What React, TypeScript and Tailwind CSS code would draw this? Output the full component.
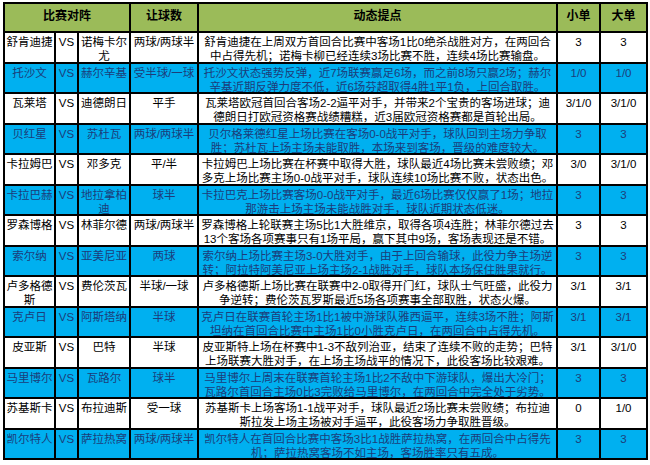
import React from "react";

interface Match {
  home: string;
  away: string;
  handicap: string;
  notes: [string, string];
  small: string;
  big: string;
}

const matches: Match[] = [
  {
    home: "舒肯迪捷",
    away: "诺梅卡尔尤",
    handicap: "两球/两球半",
    notes: [
      "舒肯迪捷在上周双方首回合比赛中客场1比0绝杀战胜对方，在两回合",
      "中占得先机；诺梅卡柳已经连续3场比赛不胜，连续4场比赛输盘。",
    ],
    small: "3",
    big: "3",
  },
  {
    home: "托沙文",
    away: "赫尔辛基",
    handicap: "受半球/一球",
    notes: [
      "托沙文状态强势反弹，近7场联赛赢足6场，而之前8场只赢2场；赫尔",
      "辛基近期反弹力度不低，近6场芬超取得4胜1平1负，上回合取胜。",
    ],
    small: "1/0",
    big: "1/0",
  },
  {
    home: "瓦莱塔",
    away: "迪德朗日",
    handicap: "平手",
    notes: [
      "瓦莱塔欧冠首回合客场2-2逼平对手，并带来2个宝贵的客场进球；迪",
      "德朗日打欧冠资格赛战绩糟糕，近3届欧冠资格赛都是首轮出局。",
    ],
    small: "3/1/0",
    big: "3/1/0",
  },
  {
    home: "贝红星",
    away: "苏杜瓦",
    handicap: "两球/两球半",
    notes: [
      "贝尔格莱德红星上场比赛在客场0-0战平对手，球队回到主场力争取",
      "胜；苏杜瓦上场主场未能取胜，本场来到客场，晋级的难度较大。",
    ],
    small: "3",
    big: "3",
  },
  {
    home: "卡拉姆巴",
    away: "邓多克",
    handicap: "平/半",
    notes: [
      "卡拉姆巴上场比赛在杯赛中取得大胜，球队最近4场比赛未尝败绩；邓",
      "多克上场比赛主场0-0战平对手，球队连续10场比赛不败，状态出色。",
    ],
    small: "3/0",
    big: "3/1/0",
  },
  {
    home: "卡拉巴赫",
    away: "地拉拿柏迪",
    handicap: "球半",
    notes: [
      "卡拉巴克上场比赛客场0-0战平对手，最近6场比赛仅仅赢了1场；地拉",
      "那游击上场主场未能战胜对手，球队近期状态低迷。",
    ],
    small: "3",
    big: "3",
  },
  {
    home: "罗森博格",
    away: "林菲尔德",
    handicap: "两球/两球半",
    notes: [
      "罗森博格上轮联赛主场5比1大胜维京，取得各项4连胜；林菲尔德过去",
      "13个客场各项赛事只有1场平局，赢下其中9场，客场表现还是不错。",
    ],
    small: "3",
    big: "3",
  },
  {
    home: "索尔纳",
    away: "亚美尼亚",
    handicap: "两球",
    notes: [
      "索尔纳上场比赛主场3-0大胜对手，由于上回合输球，此役力争主场逆",
      "转；阿拉特阿美尼亚上场主场2-1战胜对手，球队本场保住胜果就行。",
    ],
    small: "3",
    big: "3",
  },
  {
    home: "卢多格德斯",
    away: "费伦茨瓦",
    handicap: "半球/一球",
    notes: [
      "卢多格德斯上场比赛在联赛中2-0取得开门红，球队士气旺盛，此役力",
      "争逆转；费伦茨瓦罗斯最近5场各项赛事全部取胜，状态火爆。",
    ],
    small: "3/1",
    big: "3/1",
  },
  {
    home: "克卢日",
    away: "阿斯塔纳",
    handicap: "半球",
    notes: [
      "克卢日在联赛首轮主场1比1被中游球队雅西逼平，连续3场不胜；阿斯",
      "坦纳在首回合比赛中主场1比0小胜克卢日，在两回合中占得先机。",
    ],
    small: "3/1",
    big: "3/1",
  },
  {
    home: "皮亚斯",
    away: "巴特",
    handicap: "半球",
    notes: [
      "皮亚斯特上场在杯赛中1-3不敌列治亚，结束了连续不败的走势；巴特",
      "上场联赛大胜对手，在上场主场战平的情况下，此役客场比较艰难。",
    ],
    small: "3/1",
    big: "3/1/0",
  },
  {
    home: "马里博尔",
    away: "瓦路尔",
    handicap: "球半",
    notes: [
      "马里博尔上周末在联赛首轮主场1比2不敌中下游球队，爆出大冷门；",
      "瓦路尔首回合主场0比3完败给马里博尔，在两回合中完全处于劣势。",
    ],
    small: "3",
    big: "3",
  },
  {
    home: "苏基斯卡",
    away: "布拉迪斯",
    handicap: "受一球",
    notes: [
      "苏基斯卡上场客场1-1战平对手，球队最近2场比赛未尝败绩；布拉迪",
      "斯拉发上场主场被对手逼平，此役客场力争取胜晋级。",
    ],
    small: "0",
    big: "1/0",
  },
  {
    home: "凯尔特人",
    away: "萨拉热窝",
    handicap: "两球/两球半",
    notes: [
      "凯尔特人在首回合比赛中客场3比1战胜萨拉热窝，在两回合中占得先",
      "机；萨拉热窝客场不如主场，客场胜率只有五成。",
    ],
    small: "3",
    big: "3",
  },
];

function HeaderCell({ children, span }: { children: React.ReactNode; span?: boolean }) {
  return (
    <div
      className={
        "bg-[#9bbb59] text-center font-bold text-[12px] leading-[14px] pt-[5px] text-black " +
        (span ? "col-span-3" : "")
      }
    >
      {children}
    </div>
  );
}

function MatchRow({ m, blue }: { m: Match; blue: boolean }) {
  const cell = blue
    ? "bg-[#00b0f0] text-[#1c3d7a]"
    : "bg-white text-black";
  const base = "text-center text-[11.5px] leading-[14px] pt-[2px] overflow-hidden " + cell;

  return (
    <>
      <div className={base}>{m.home}</div>
      <div className={base + " text-[10px]"}>VS</div>
      <div className={base}>{m.away}</div>
      <div className={base}>{m.handicap}</div>
      <div className={base + " whitespace-nowrap"}>
        {m.notes[0]}
        <br />
        {m.notes[1]}
      </div>
      <div className={base}>{m.small}</div>
      <div className={base}>{m.big}</div>
    </>
  );
}

export default function App() {
  return (
    <div
      className="w-[650px] h-[465px] bg-white pt-[2px] pl-[3px] overflow-hidden"
      style={{ fontFamily: '"Liberation Sans", "Noto Sans CJK SC", sans-serif' }}
    >
      <div className="grid w-fit bg-black p-[2px] gap-[2px] grid-cols-[49px_21px_50px_66px_357px_41px_45px] grid-rows-[27px_repeat(7,29px_28px)]">
        <HeaderCell span>比赛对阵</HeaderCell>
        <HeaderCell>让球数</HeaderCell>
        <HeaderCell>动态提点</HeaderCell>
        <HeaderCell>小单</HeaderCell>
        <HeaderCell>大单</HeaderCell>
        {matches.map((m, i) => (
          <MatchRow key={m.home} m={m} blue={i % 2 === 1} />
        ))}
      </div>
    </div>
  );
}
